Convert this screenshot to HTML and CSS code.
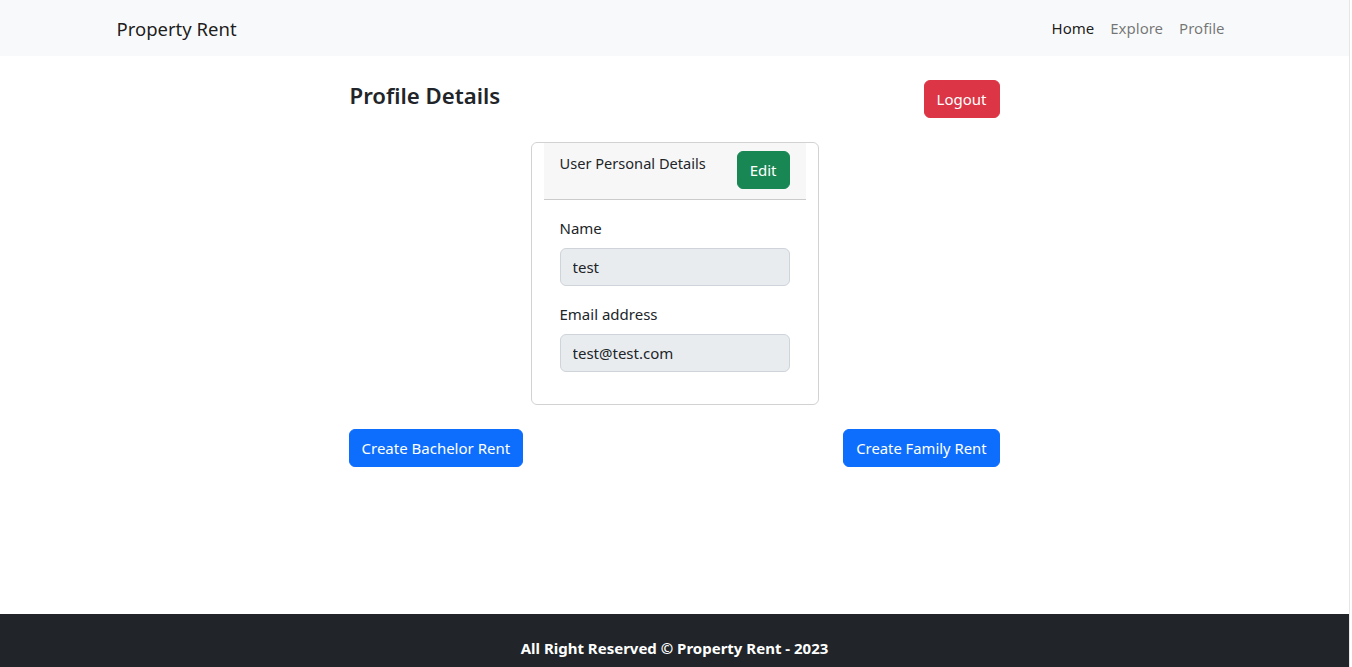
FILE: index.html
```html
<!DOCTYPE html>
<html lang="en">
<head>
<meta charset="utf-8">
<title>Property Rent</title>
<link rel="stylesheet" href="styles.css">
</head>
<body>
<nav class="navbar">
  <div class="container nav-inner">
    <a class="brand" href="#">Property Rent</a>
    <ul class="nav-links">
      <li><a class="nav-link active" href="#">Home</a></li>
      <li><a class="nav-link" href="#">Explore</a></li>
      <li><a class="nav-link" href="#">Profile</a></li>
    </ul>
  </div>
</nav>

<main class="profile">
  <div class="profile-head">
    <h4 class="title">Profile Details</h4>
    <button class="btn btn-danger">Logout</button>
  </div>

  <div class="card">
    <div class="card-header">
      <span class="card-title">User Personal Details</span>
      <button class="btn btn-success">Edit</button>
    </div>
    <div class="card-body">
      <div class="field">
        <label class="label">Name</label>
        <input class="input" type="text" value="test" disabled>
      </div>
      <div class="field">
        <label class="label">Email address</label>
        <input class="input" type="email" value="test@test.com" disabled>
      </div>
    </div>
  </div>

  <div class="actions">
    <button class="btn btn-primary">Create Bachelor Rent</button>
    <button class="btn btn-primary btn-family">Create Family Rent</button>
  </div>
</main>

<footer class="footer">
  <p class="footer-text">All Right Reserved © Property Rent - 2023</p>
</footer>
</body>
</html>
```

FILE: styles.css
```css
html {
  overflow-y: scroll;
}
::-webkit-scrollbar {
  width: 2px;
}
::-webkit-scrollbar-track {
  background: #f1f1f1;
}
::-webkit-scrollbar-thumb {
  background: #c8c8c8;
}

* {
  box-sizing: border-box;
}

body {
  margin: 0 2px 0 0;
  font-family: "Noto Sans", "Open Sans", sans-serif;
  font-size: 16px;
  line-height: 1.5;
  color: #212529;
  background: #fff;
  border-right: 1px solid #e6e6e6;
}

.container {
  max-width: 1140px;
  margin: 0 auto;
  padding: 0 12px;
}

.navbar {
  background: #f8f9fa;
  height: 56px;
}

.nav-inner {
  height: 100%;
  display: flex;
  align-items: center;
  justify-content: space-between;
}

.brand {
  font-size: 18.5px;
  color: rgba(0, 0, 0, 0.9);
  text-decoration: none;
  padding: 6px 0 4px;
}

.nav-links {
  list-style: none;
  margin: 0;
  padding: 0;
  display: flex;
}

.nav-link {
  display: block;
  padding: 8px 8px;
  font-size: 15px;
  color: rgba(0, 0, 0, 0.55);
  text-decoration: none;
}

.nav-link.active {
  color: rgba(0, 0, 0, 0.9);
}

.profile {
  width: 650px;
  margin: 0 auto;
  padding-top: 24px;
}

.profile-head {
  display: flex;
  justify-content: space-between;
  align-items: flex-start;
}

.title {
  margin: 0;
  font-size: 22.2px;
  font-weight: 600;
  line-height: 1.2;
  padding-top: 3px;
}

.btn {
  font-family: inherit;
  font-size: 15px;
  line-height: 24px;
  padding: 6px 12px;
  border: 1px solid transparent;
  border-radius: 6px;
  color: #fff;
  cursor: pointer;
}

.btn-danger {
  background: #dc3545;
  border-color: #dc3545;
}

.btn-success {
  background: #198754;
  border-color: #198754;
}

.btn-primary {
  background: #0d6efd;
  border-color: #0d6efd;
}

.btn-family {
  font-size: 14.8px;
}

.card {
  width: 288px;
  margin: 24px auto 0;
  border: 1px solid rgba(0, 0, 0, 0.175);
  border-radius: 6px;
  padding: 0 12px;
}

.card-header {
  display: flex;
  justify-content: space-between;
  align-items: flex-start;
  padding: 8px 16px 10px;
  background: #f7f7f7;
  border-bottom: 1px solid rgba(0, 0, 0, 0.175);
}

.card-title {
  font-size: 14.6px;
  line-height: 24px;
}

.card-body {
  padding: 16px;
}

.field {
  margin-bottom: 16px;
}

.label {
  display: block;
  font-size: 15px;
  line-height: 24px;
  margin-bottom: 8px;
}

.input {
  display: block;
  width: 100%;
  height: 38px;
  padding: 6px 12px;
  font-family: inherit;
  font-size: 15px;
  line-height: 24px;
  color: #212529;
  background: #e9ecef;
  border: 1px solid #ced4da;
  border-radius: 6px;
}

.actions {
  display: flex;
  justify-content: space-between;
  margin-top: 24px;
}

.actions .btn:first-child {
  margin-left: -1px;
}

.footer {
  margin-top: 147px;
  background: #212529;
  padding: 22px 0 26px;
}

.footer-text {
  margin: 0;
  text-align: center;
  color: #fff;
  font-weight: 700;
  font-size: 15px;
  line-height: 24px;
}
```
